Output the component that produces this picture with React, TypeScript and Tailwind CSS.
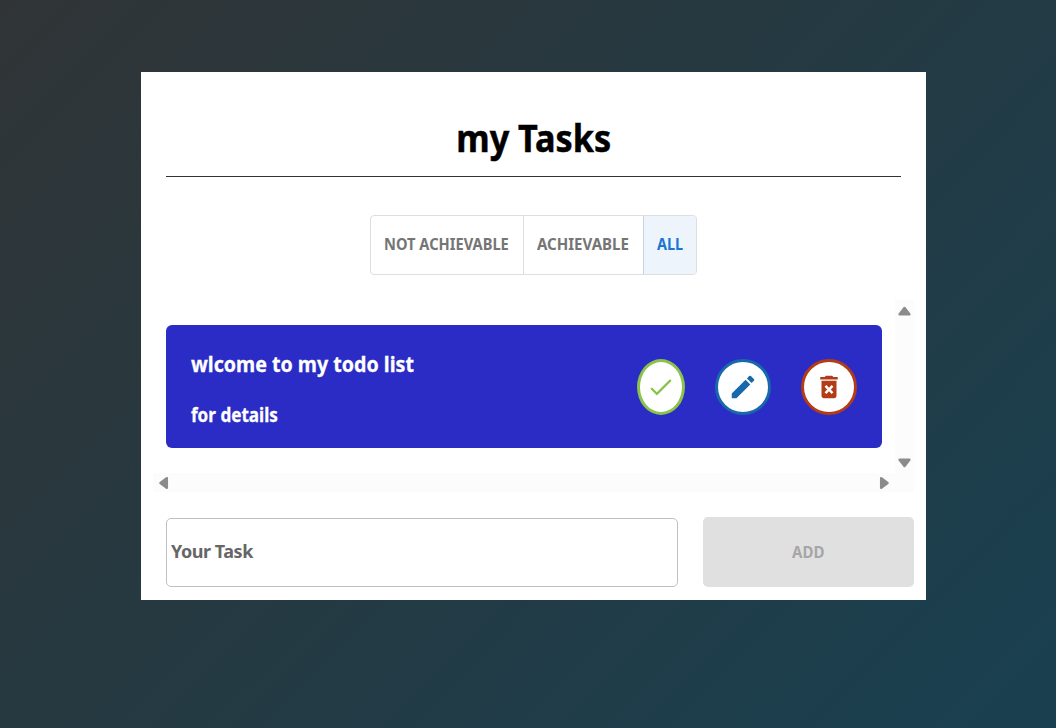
import type { ReactNode } from "react";

function Arrow({ className }: { className: string }) {
  return (
    <svg viewBox="0 0 13 10" className={className} fill="#8b8b8b" stroke="#8b8b8b" strokeWidth="2.6" strokeLinejoin="round">
      <path d="M6.5 2 11.3 8.3H1.7Z" />
    </svg>
  );
}

function Action({ label, className, children }: { label: string; className: string; children: ReactNode }) {
  return (
    <button aria-label={label} className={`flex h-14 items-center justify-center rounded-[50%] border-[3px] bg-white ${className}`}>
      {children}
    </button>
  );
}

export default function App() {
  return (
    <div className="h-[728px] bg-[linear-gradient(135deg,#303436,#194050)] pt-[72px] pl-[141px] font-['Noto_Sans',sans-serif] font-bold whitespace-nowrap">
      <main className="flex h-[528px] w-[785px] flex-col bg-white">
        <header className="mx-[25px] flex h-[105px] items-start justify-center border-b border-[#333] pt-[45px] text-black">
          <h1 className="scale-x-[0.925] text-[37px] leading-[42px] [-webkit-text-stroke:0.5px_black]">my Tasks</h1>
        </header>
        <div className="mt-[38px] flex h-[60px] w-[327px] self-center overflow-hidden rounded border border-[#dedede] text-[16px] text-[#757575]">
          <button className="w-[153px] border-r border-[#dedede] pb-[2px] pl-[13px] text-left"><span className="inline-block origin-left scale-x-[0.915]">NOT ACHIEVABLE</span></button>
          <button className="w-[119px] pb-[2px] pl-[13px] text-left"><span className="inline-block origin-left scale-x-[0.94]">ACHIEVABLE</span></button>
          <button className="w-[53px] border-l border-[#c9d3df] bg-[#edf4fc] pb-[2px] pl-[13px] text-left text-[#1976d2]"><span className="inline-block origin-left scale-x-[0.9]">ALL</span></button>
        </div>
        <section className="mt-[25px] ml-[12px] grid h-[192px] w-[761px] grid-cols-[742px_19px] grid-rows-[173px_19px]">
          <div className="pt-[25px] pl-[13px]">
            <article className="flex h-[123px] w-[716px] justify-between rounded-md bg-[#2b2cc6] pr-[25px] pl-[25px] text-white">
              <div className="flex flex-col pt-[23px]">
                <h2 className="origin-left scale-x-[0.892] text-[22px] leading-[30px] [-webkit-text-stroke:0.3px_white]">wlcome to my todo list</h2>
                <p className="mt-[23px] origin-left scale-x-[0.9] text-[19px] leading-[28px] [-webkit-text-stroke:0.3px_white]">for details</p>
              </div>
              <div className="flex gap-[30px] pt-[34px]">
                <Action label="Complete" className="w-12 border-[#8bc34a]">
                  <svg width="30" height="30" viewBox="0 0 24 24" fill="none" stroke="#8bc34a" strokeWidth="1.8" strokeLinecap="round"><path d="m4.6 13.4 4.1 4.1L19.3 6.9" /></svg>
                </Action>
                <Action label="Edit" className="w-14 border-[#1769aa]">
                  <svg width="30" height="30" viewBox="0 0 24 24" fill="#1769aa"><path d="M3 17.25V21h3.75L17.81 9.94l-3.75-3.75zM20.71 7.04a1 1 0 0 0 0-1.41l-2.34-2.34a1 1 0 0 0-1.41 0l-1.83 1.83 3.75 3.75z" /></svg>
                </Action>
                <Action label="Delete" className="w-14 border-[#b23c17]">
                  <svg width="30" height="30" viewBox="0 0 24 24" fill="#b23c17"><path d="M6 19c0 1.1.9 2 2 2h8c1.1 0 2-.9 2-2V7H6zm2.46-7.12 1.41-1.41L12 12.59l2.12-2.12 1.41 1.41L13.41 14l2.12 2.12-1.41 1.41L12 15.41l-2.12 2.12-1.41-1.41L10.59 14zM15.5 4l-1-1h-5l-1 1H5v2h14V4z" /></svg>
                </Action>
              </div>
            </article>
          </div>
          <div className="flex flex-col items-center justify-between bg-[#fcfcfc] pt-[6px] pb-[5px]">
            <Arrow className="h-[10px] w-[13px]" />
            <Arrow className="h-[10px] w-[13px] rotate-180" />
          </div>
          <div className="flex items-center justify-between bg-[#fcfcfc] pr-[4px] pl-[4px]">
            <Arrow className="h-[10px] w-[13px] -rotate-90" />
            <Arrow className="h-[10px] w-[13px] rotate-90" />
          </div>
          <div className="bg-[#fcfcfc]" />
        </section>
        <form className="mt-[25px] flex h-[70px] gap-[25px] pl-[25px]">
          <input aria-label="Your Task" placeholder="Your Task" className="mt-px h-[69px] w-[512px] rounded-[5px] border border-[#c0c0c0] pb-[3px] pl-[4px] text-[18px] tracking-[-0.45px] placeholder:text-[#666]" />
          <button type="button" className="h-[70px] w-[211px] rounded-[5px] bg-[#e0e0e0] text-[16px] text-[#a6a6a6]"><span className="inline-block scale-x-[0.94]">ADD</span></button>
        </form>
      </main>
    </div>
  );
}
